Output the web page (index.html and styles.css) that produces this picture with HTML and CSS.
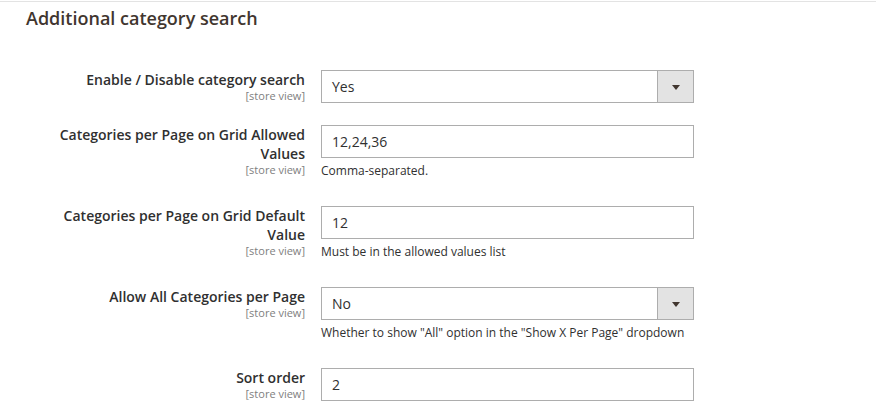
FILE: index.html
```html
<!DOCTYPE html>
<html>
<head>
<meta charset="utf-8">
<link rel="stylesheet" href="styles.css">
</head>
<body>
<div class="section">
  <h2 class="title">Additional category search</h2>
  <div class="form">
    <div class="row">
      <div class="label">
        <div class="label-text">Enable / Disable category search</div>
        <div class="scope">[store view]</div>
      </div>
      <div class="control">
        <div class="select">
          <span class="select-value">Yes</span>
          <span class="select-btn"><span class="arrow"></span></span>
        </div>
      </div>
    </div>
    <div class="row">
      <div class="label">
        <div class="label-text">Categories per Page on Grid Allowed Values</div>
        <div class="scope">[store view]</div>
      </div>
      <div class="control">
        <div class="input">12,24,36</div>
        <div class="note">Comma-separated.</div>
      </div>
    </div>
    <div class="row">
      <div class="label">
        <div class="label-text">Categories per Page on Grid Default Value</div>
        <div class="scope">[store view]</div>
      </div>
      <div class="control">
        <div class="input">12</div>
        <div class="note">Must be in the allowed values list</div>
      </div>
    </div>
    <div class="row">
      <div class="label">
        <div class="label-text">Allow All Categories per Page</div>
        <div class="scope">[store view]</div>
      </div>
      <div class="control">
        <div class="select">
          <span class="select-value">No</span>
          <span class="select-btn"><span class="arrow"></span></span>
        </div>
        <div class="note">Whether to show "All" option in the "Show X Per Page" dropdown</div>
      </div>
    </div>
    <div class="row">
      <div class="label">
        <div class="label-text">Sort order</div>
        <div class="scope">[store view]</div>
      </div>
      <div class="control">
        <div class="input">2</div>
      </div>
    </div>
  </div>
</div>
</body>
</html>
```

FILE: styles.css
```css
html, body {
  margin: 0;
  padding: 0;
  background: #ffffff;
}
body {
  font-family: "Open Sans", "Liberation Sans", sans-serif;
  color: #303030;
}
.section {
  margin-top: 1px;
  border-top: 1px solid #e3e3e3;
}
.title {
  margin: 0;
  padding: 4px 0 0 26px;
  font-size: 18px;
  font-weight: 600;
  line-height: 24px;
  color: #41362f;
}
.form {
  padding: 40px 0 0 50px;
  display: flex;
  flex-direction: column;
  gap: 22px;
}
.row {
  display: grid;
  grid-template-columns: 255px 373px;
  column-gap: 16px;
  align-items: start;
}
.label {
  text-align: right;
}
.label-text {
  font-size: 14px;
  font-weight: 600;
  line-height: 19px;
  color: #303030;
}
.scope {
  font-size: 11px;
  line-height: 13px;
  color: #808080;
}
.control {
  display: flex;
  flex-direction: column;
}
.input,
.select {
  box-sizing: border-box;
  height: 33px;
  border: 1px solid #adadad;
  background: #ffffff;
  font-size: 14px;
  line-height: 31px;
  color: #303030;
}
.input {
  padding-left: 10px;
}
.select {
  display: flex;
}
.select-value {
  flex: 1;
  padding-left: 10px;
}
.select-btn {
  width: 35px;
  border-left: 1px solid #adadad;
  background: #e3e3e3;
  display: flex;
  align-items: center;
  justify-content: center;
}
.arrow {
  width: 0;
  height: 0;
  border-left: 4px solid transparent;
  border-right: 4px solid transparent;
  border-top: 5px solid #41362f;
  margin-top: 1px;
}
.note {
  margin-top: 5px;
  margin-bottom: 6px;
  font-size: 12px;
  line-height: 15px;
  color: #303030;
}
```
